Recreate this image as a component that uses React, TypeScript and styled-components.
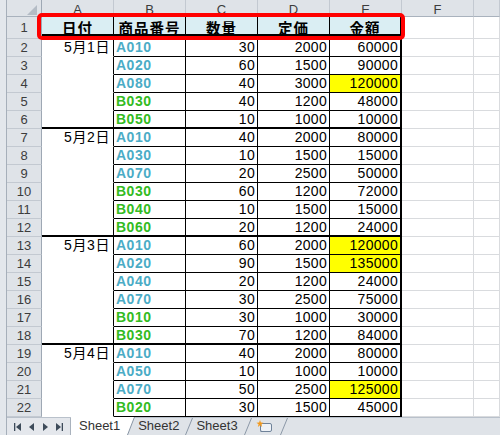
import React from 'react';
import styled, { createGlobalStyle } from 'styled-components';

const GlobalStyle = createGlobalStyle`
  html, body { margin: 0; padding: 0; background: #fff; }
  body { font-family: "Liberation Sans", "Noto Sans CJK JP", sans-serif; }
`;

type Edge = 'grid' | 'none' | 'thin' | 'thick' | 'double' | 'thickRight';
type Fill = 'white' | 'title' | 'yellow';
type TextKind = 'date' | 'codeA' | 'codeB' | 'num' | 'title' | 'plain';

const edges: Record<Edge, string> = {
  grid: '1px solid #d9dbde',
  none: '1px solid #ffffff',
  thin: '1px solid #000000',
  thick: '2px solid #000000',
  double: '5px double #000000',
  thickRight: '2px solid #000000',
};

const fills: Record<Fill, string> = {
  white: '#ffffff',
  title: '#daeef3',
  yellow: '#ffff00',
};

const Window = styled.div`
  width: 500px;
  height: 435px;
  display: flex;
  overflow: hidden;
  background: #dfe3e8;
`;

const Frame = styled.div`
  width: 6px;
  flex: none;
  background: #e3e7ec;
  border-right: 1px solid #a6afba;
`;

const Main = styled.div`
  flex: 1;
  min-width: 0;
  display: flex;
  flex-direction: column;
  position: relative;
`;

const Sheet = styled.div`
  display: grid;
  grid-template-columns: 35px repeat(6, 72px) 1fr;
  grid-template-rows: 17px 22px repeat(21, 18px);
  background: #fff;
`;

const ColHead = styled.div`
  box-sizing: border-box;
  background: #dfe3e8;
  border-right: 1px solid #c3c9d1;
  border-bottom: 1px solid #a9b2bd;
  color: #3c3c3c;
  font: 13px/14px "Liberation Sans", sans-serif;
  text-align: center;
  padding-top: 3px;
  overflow: hidden;
`;

const Corner = styled(ColHead)`
  display: flex;
  align-items: flex-end;
  justify-content: flex-end;
  padding: 0 4px 1px 0;
  border-right: 1px solid #9ea8b4;
`;

const RowHead = styled.div`
  box-sizing: border-box;
  background: #dfe3e8;
  border-right: 1px solid #9ea8b4;
  border-bottom: 1px solid #c3c9d1;
  color: #3c3c3c;
  font: 13px/17px "Liberation Sans", sans-serif;
  display: flex;
  align-items: center;
  justify-content: center;
`;

const textStyles: Record<TextKind, string> = {
  date: 'justify-content: flex-end; padding-right: 3px; color: #000; letter-spacing: 0.6px;',
  codeA: 'justify-content: flex-start; padding-left: 2px; color: #4bacc6; font-weight: bold; letter-spacing: 0.5px;',
  codeB: 'justify-content: flex-start; padding-left: 2px; color: #33bb22; font-weight: bold; letter-spacing: 0.5px;',
  num: 'justify-content: flex-end; padding-right: 2px; color: #000; letter-spacing: 0.3px;',
  title: 'justify-content: center; padding-top: 3px; color: #000; font-weight: bold; font-size: 14.5px; letter-spacing: 1px; font-family: "Noto Sans CJK JP", sans-serif;',
  plain: '',
};

const Cell = styled.div<{ $bottom: Edge; $right: Edge; $fill: Fill; $text: TextKind }>`
  box-sizing: border-box;
  display: flex;
  align-items: center;
  overflow: hidden;
  white-space: nowrap;
  font-size: 14px;
  line-height: 17px;
  background: ${(p) => fills[p.$fill]};
  border-bottom: ${(p) => edges[p.$bottom]};
  border-right: ${(p) => edges[p.$right]};
  ${(p) => textStyles[p.$text]}
`;

const Highlight = styled.div`
  position: absolute;
  left: 30px;
  top: 13px;
  width: 368px;
  height: 27px;
  box-sizing: border-box;
  border: 4px solid #ff0000;
  border-radius: 5px;
  pointer-events: none;
`;

const TabBar = styled.div`
  height: 18px;
  box-sizing: border-box;
  display: flex;
  align-items: stretch;
  background: #dfe3e8;
  border-top: 1px solid #b9c1cb;
`;

const NavBox = styled.div`
  width: 64px;
  box-sizing: border-box;
  display: flex;
  align-items: center;
  padding: 0 4px;
  background: #e4e7ec;
  border-right: 1px solid #a9b2bd;
`;

const NavButton = styled.span`
  width: 14px;
  display: flex;
  justify-content: center;
  align-items: center;
  color: #3d4b5a;
`;

const Tab = styled.div<{ $active?: boolean }>`
  display: flex;
  align-items: center;
  padding: ${(p) => (p.$active ? '0 7px 1px 8px' : '0 6px 1px 3px')};
  margin-top: ${(p) => (p.$active ? '-1px' : '0')};
  background: ${(p) => (p.$active ? '#ffffff' : 'transparent')};
  color: #333;
  font: 13px/16px "Liberation Sans", sans-serif;
`;

const IconTab = styled.div`
  display: flex;
  align-items: center;
  padding: 0 8px 0 4px;
`;

const SlantBox = styled.div<{ $active?: boolean }>`
  width: 8px;
  display: flex;
  margin-top: ${(p) => (p.$active ? '-1px' : '0')};
`;

const Slant = ({ active }: { active?: boolean }) => (
  <SlantBox $active={active}>
    <svg width="8" height={active ? 18 : 17} viewBox="0 0 8 18" preserveAspectRatio="none">
      {active && <polygon points="0,0 7.5,0 0.5,18 0,18" fill="#ffffff" />}
      <line x1="0.5" y1="18" x2="7.5" y2="0" stroke="#8895a4" strokeWidth="1" />
    </svg>
  </SlantBox>
);

const FirstIcon = () => (
  <svg width="7" height="8" viewBox="0 0 7 8">
    <rect x="0" y="0" width="1.3" height="8" fill="currentColor" />
    <polygon points="7,0 7,8 2,4" fill="currentColor" />
  </svg>
);
const PrevIcon = () => (
  <svg width="5" height="8" viewBox="0 0 5 8">
    <polygon points="5,0 5,8 0,4" fill="currentColor" />
  </svg>
);
const NextIcon = () => (
  <svg width="5" height="8" viewBox="0 0 5 8">
    <polygon points="0,0 0,8 5,4" fill="currentColor" />
  </svg>
);
const LastIcon = () => (
  <svg width="7" height="8" viewBox="0 0 7 8">
    <polygon points="0,0 0,8 5,4" fill="currentColor" />
    <rect x="5.7" y="0" width="1.3" height="8" fill="currentColor" />
  </svg>
);

const NewSheetIcon = () => (
  <svg width="16" height="13" viewBox="0 0 16 13">
    <rect x="4.5" y="3.5" width="11" height="8" rx="1.5" fill="#eef2f7" stroke="#6f8299" />
    <path d="M4.5 11.5 L6.5 11.5" stroke="#6f8299" />
    <g fill="#f39a1e">
      <polygon points="4,0 4.9,2.6 7.6,2.7 5.4,4.3 6.2,6.9 4,5.3 1.8,6.9 2.6,4.3 0.4,2.7 3.1,2.6" />
    </g>
  </svg>
);

const CornerMark = () => (
  <svg width="10" height="10" viewBox="0 0 10 10">
    <polygon points="10,0 10,10 0,10" fill="#b4bcc5" />
  </svg>
);

type DataRow = {
  date?: string;
  code: string;
  qty: number;
  price: number;
  amount: number;
  hl?: boolean;
  end?: boolean;
};

const data: DataRow[] = [
  { date: '5月1日', code: 'A010', qty: 30, price: 2000, amount: 60000 },
  { code: 'A020', qty: 60, price: 1500, amount: 90000 },
  { code: 'A080', qty: 40, price: 3000, amount: 120000, hl: true },
  { code: 'B030', qty: 40, price: 1200, amount: 48000 },
  { code: 'B050', qty: 10, price: 1000, amount: 10000, end: true },
  { date: '5月2日', code: 'A010', qty: 40, price: 2000, amount: 80000 },
  { code: 'A030', qty: 10, price: 1500, amount: 15000 },
  { code: 'A070', qty: 20, price: 2500, amount: 50000 },
  { code: 'B030', qty: 60, price: 1200, amount: 72000 },
  { code: 'B040', qty: 10, price: 1500, amount: 15000 },
  { code: 'B060', qty: 20, price: 1200, amount: 24000, end: true },
  { date: '5月3日', code: 'A010', qty: 60, price: 2000, amount: 120000, hl: true },
  { code: 'A020', qty: 90, price: 1500, amount: 135000, hl: true },
  { code: 'A040', qty: 20, price: 1200, amount: 24000 },
  { code: 'A070', qty: 30, price: 2500, amount: 75000 },
  { code: 'B010', qty: 30, price: 1000, amount: 30000 },
  { code: 'B030', qty: 70, price: 1200, amount: 84000, end: true },
  { date: '5月4日', code: 'A010', qty: 40, price: 2000, amount: 80000 },
  { code: 'A050', qty: 10, price: 1000, amount: 10000 },
  { code: 'A070', qty: 50, price: 2500, amount: 125000, hl: true },
  { code: 'B020', qty: 30, price: 1500, amount: 45000 },
];

const titles = ['日付', '商品番号', '数量', '定価', '金額'];
const letters = ['A', 'B', 'C', 'D', 'E', 'F', ''];

export default function App() {
  return (
    <>
      <GlobalStyle />
      <Window>
        <Frame />
        <Main>
          <Sheet>
            <Corner>
              <CornerMark />
            </Corner>
            {letters.map((l, i) => (
              <ColHead key={`c${i}`}>{l}</ColHead>
            ))}

            <RowHead>1</RowHead>
            {titles.map((t, i) => (
              <Cell
                key={`t${i}`}
                $bottom="double"
                $right={i === 4 ? 'thickRight' : 'thin'}
                $fill="title"
                $text="title"
              >
                {t}
              </Cell>
            ))}
            <Cell $bottom="grid" $right="grid" $fill="white" $text="plain" />
            <Cell $bottom="grid" $right="grid" $fill="white" $text="plain" />

            {data.map((r, i) => {
              const line: Edge = r.end ? 'thick' : 'thin';
              return (
                <React.Fragment key={`r${i}`}>
                  <RowHead>{i + 2}</RowHead>
                  <Cell $bottom={r.end ? 'thick' : 'none'} $right="thin" $fill="white" $text="date">
                    {r.date ?? ''}
                  </Cell>
                  <Cell $bottom={line} $right="thin" $fill="white" $text={r.code.startsWith('A') ? 'codeA' : 'codeB'}>
                    {r.code}
                  </Cell>
                  <Cell $bottom={line} $right="thin" $fill="white" $text="num">
                    {r.qty}
                  </Cell>
                  <Cell $bottom={line} $right="thin" $fill="white" $text="num">
                    {r.price}
                  </Cell>
                  <Cell $bottom={line} $right="thickRight" $fill={r.hl ? 'yellow' : 'white'} $text="num">
                    {r.amount}
                  </Cell>
                  <Cell $bottom="grid" $right="grid" $fill="white" $text="plain" />
                  <Cell $bottom="grid" $right="grid" $fill="white" $text="plain" />
                </React.Fragment>
              );
            })}
          </Sheet>
          <Highlight />
          <TabBar>
            <NavBox>
              <NavButton><FirstIcon /></NavButton>
              <NavButton><PrevIcon /></NavButton>
              <NavButton><NextIcon /></NavButton>
              <NavButton><LastIcon /></NavButton>
            </NavBox>
            <Tab $active>Sheet1</Tab>
            <Slant active />
            <Tab>Sheet2</Tab>
            <Slant />
            <Tab>Sheet3</Tab>
            <Slant />
            <IconTab>
              <NewSheetIcon />
            </IconTab>
            <Slant />
          </TabBar>
        </Main>
      </Window>
    </>
  );
}
